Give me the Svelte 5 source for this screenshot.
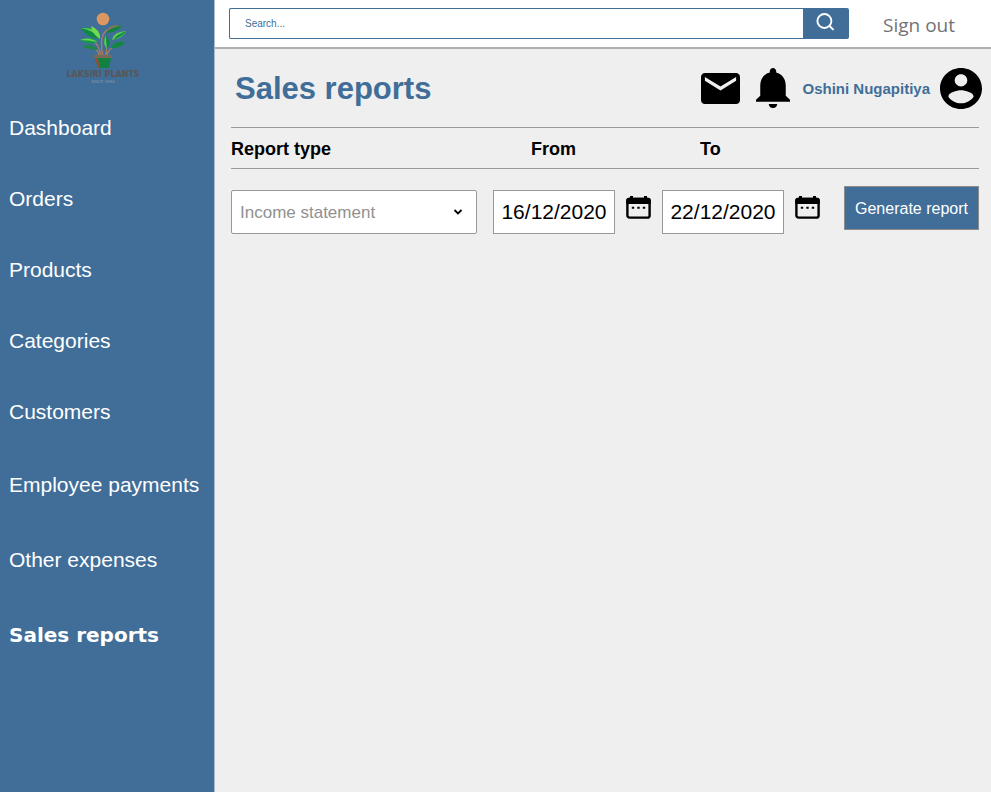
<script>
  const pages = [
    { name: 'Dashboard' },
    { name: 'Orders' },
    { name: 'Products' },
    { name: 'Categories' },
    { name: 'Customers' },
    { name: 'Employee payments', tall: true },
    { name: 'Other expenses', tall: true },
    { name: 'Sales reports', tall: true },
  ];
  const current = 'Sales reports';

  let query = $state('');
  let reportType = $state('Income statement');
  let from = $state('16/12/2020');
  let to = $state('22/12/2020');
</script>

{#snippet calendar()}
  <svg width="25" height="23" viewBox="0 0 25 23" aria-hidden="true">
    <rect x="1.4" y="3" width="22.2" height="18.6" rx="2.2" fill="none" stroke="#000" stroke-width="2.4" />
    <path d="M.2 8V4.4Q.2 1.8 2.8 1.8H22.2Q24.8 1.8 24.8 4.4V8Z" />
    <path d="M4 0h3v3H4zM18 0h3v3h-3z" />
    <path d="M5.8 10.8h2.4v2H5.8zM11.3 10.8h2.4v2h-2.4zM16.8 10.8h2.4v2h-2.4z" />
  </svg>
{/snippet}

<div class="app">
  <aside>
    <div class="brand">
      <svg width="50" height="58" viewBox="0 0 50 58" aria-hidden="true">
        <circle cx="25" cy="7" r="6.3" fill="#dd9760" />
        <g fill="none" stroke="#a98063" stroke-width="1.3">
          <path d="M23 45Q22 33 14 28" />
          <path d="M25 45Q22 30 25 23Q28 17 35 16" />
          <path d="M27 45Q30 38 28 28" />
          <path d="M28 45Q31 36 38 33" />
          <path d="M21 43Q19 33 6 35" />
        </g>
        <path d="M3 16Q18 13 22 27Q8 26 3 16Z" fill="#0e8a45" />
        <path d="M3 16Q15 18 22 27Q21 15 3 16Z" fill="#5fce4c" />
        <path d="M13 14Q23 18 22 27Q14 22 13 14Z" fill="#72da4e" />
        <path d="M28 21Q31 11 44 14Q38 21 28 21Z" fill="#12823f" />
        <path d="M28 20Q31 11 44 14Q35 14 28 20Z" fill="#8b7560" />
        <path d="M34 28Q35 20 48 19Q46 26 34 28Z" fill="#67d052" />
        <path d="M35 28Q39 22 48 19Q45 25 35 28Z" fill="#14904a" />
        <path d="M2 28Q12 23 20 30Q10 34 2 28Z" fill="#19994a" />
        <path d="M2 28Q10 24 20 30Q10 28 2 28Z" fill="#69d554" />
        <path d="M28 23Q34 29 29 37Q24 31 28 23Z" fill="#0d8842" />
        <path d="M28 23Q28 30 29 37Q24 31 28 23Z" fill="#62cc4e" />
        <path d="M33 36Q36 28 47 30Q43 37 33 36Z" fill="#138844" />
        <path d="M4 35Q14 30 20 38Q10 37 4 35Z" fill="#21854a" />
        <path d="M16 43H34V46H16Z" fill="#79695a" />
        <path d="M17 46H33L31 56H20Z" fill="#118141" />
        <path d="M17 46H20L22 56H20Z" fill="#87533a" />
      </svg>
      <strong>LAKSIRI PLANTS</strong>
      <small>SINCE 1990</small>
    </div>
    <nav aria-label="Main">
      <ul>
        {#each pages as page}
          <li class:tall={page.tall}>
            <a href="#{page.name}" class:current={page.name === current} aria-current={page.name === current ? 'page' : undefined}>{page.name}</a>
          </li>
        {/each}
      </ul>
    </nav>
  </aside>

  <div class="content">
    <div class="topbar">
      <form class="search" role="search">
        <input type="search" aria-label="Search" placeholder="Search..." bind:value={query} />
        <button type="button" aria-label="Search">
          <svg width="20" height="20" viewBox="0 0 20 20" fill="none" stroke="#fff" stroke-width="1.9" stroke-linecap="round" aria-hidden="true">
            <circle cx="8.4" cy="9" r="7" />
            <path d="M13.6 14L17 17.4" />
          </svg>
        </button>
      </form>
      <a class="signout" href="#signout">Sign out</a>
    </div>

    <main>
      <header>
        <h1>Sales reports</h1>
        <button type="button" class="icon mail" aria-label="Messages">
          <svg width="39" height="31" viewBox="2 4 20 16" preserveAspectRatio="none" aria-hidden="true">
            <path d="M20 4H4c-1.1 0-1.99.9-1.99 2L2 18c0 1.1.9 2 2 2h16c1.1 0 2-.9 2-2V6c0-1.1-.9-2-2-2zm0 4l-8 5-8-5V6l8 5 8-5v2z" />
          </svg>
        </button>
        <button type="button" class="icon bell" aria-label="Notifications">
          <svg width="34" height="40" viewBox="4 2.5 16 19.5" preserveAspectRatio="none" aria-hidden="true">
            <path d="M12 22c1.1 0 2-.9 2-2h-4c0 1.1.89 2 2 2zm6-6v-5c0-3.07-1.64-5.64-4.5-6.32V4c0-.83-.67-1.5-1.5-1.5s-1.5.67-1.5 1.5v.68C7.63 5.36 6 7.92 6 11v5l-2 2v1h16v-1l-2-2z" />
          </svg>
        </button>
        <span class="user">Oshini Nugapitiya</span>
        <button type="button" class="icon" aria-label="Account">
          <svg width="42" height="41" viewBox="2 2 20 20" preserveAspectRatio="none" aria-hidden="true">
            <path d="M12 2C6.48 2 2 6.48 2 12s4.48 10 10 10 10-4.48 10-10S17.52 2 12 2zm0 3c1.66 0 3 1.34 3 3s-1.34 3-3 3-3-1.34-3-3 1.34-3 3-3zm0 14.2c-2.5 0-4.71-1.28-6-3.22.03-1.99 4-3.08 6-3.08 1.99 0 5.97 1.09 6 3.08-1.29 1.94-3.5 3.22-6 3.22z" />
          </svg>
        </button>
      </header>

      <form class="report">
        <div class="row labels">
          <label for="type">Report type</label>
          <label class="date-label" for="from">From</label>
          <label class="date-label" for="to">To</label>
        </div>
        <div class="row fields">
          <div class="select">
            <select id="type" bind:value={reportType}>
              <option>Income statement</option>
            </select>
            <svg width="10" height="8" viewBox="0 0 10 8" fill="none" stroke="#000" stroke-width="1.8" aria-hidden="true">
              <path d="M1.5 2L5 5.5L8.5 2" />
            </svg>
          </div>
          <div class="date">
            <input id="from" type="text" bind:value={from} />
            <button type="button" class="icon" aria-label="Pick start date">{@render calendar()}</button>
          </div>
          <div class="date">
            <input id="to" type="text" bind:value={to} />
            <button type="button" class="icon" aria-label="Pick end date">{@render calendar()}</button>
          </div>
          <button type="button" class="generate">Generate report</button>
        </div>
      </form>
    </main>
  </div>
</div>

<style>
  * {
    box-sizing: border-box;
  }

  .app {
    display: flex;
    min-height: 100vh;
    background: #efefef;
    font-family: 'Liberation Sans', Arial, sans-serif;
  }

  button,
  input,
  select {
    margin: 0;
    font-family: inherit;
  }

  aside {
    flex: none;
    width: 215px;
    background: #406e98;
    border-right: 1px solid #a9bbcb;
  }

  .brand {
    display: flex;
    flex-direction: column;
    align-items: center;
    height: 92px;
    padding: 12px 8px 0 0;
    color: #5b5556;
    font-family: 'DejaVu Sans', sans-serif;
  }

  .brand svg {
    flex: none;
  }

  .brand strong {
    font-size: 8px;
    line-height: 9px;
    font-weight: 700;
  }

  .brand small {
    color: #8798ab;
    font-size: 4px;
    line-height: 5px;
  }

  ul {
    margin: 0;
    padding: 0;
    list-style: none;
  }

  li a {
    display: flex;
    align-items: center;
    height: 71px;
    padding-left: 9px;
    color: #fff;
    font-size: 21px;
    text-decoration: none;
    white-space: nowrap;
  }

  .tall a {
    height: 75px;
  }

  li .current {
    font-family: 'Arial Black', 'DejaVu Sans', sans-serif;
    font-size: 20px;
    font-weight: 900;
  }

  .content {
    flex: 1;
    min-width: 0;
  }

  .topbar {
    display: flex;
    align-items: flex-start;
    height: 49px;
    padding: 8px 36px 0 14px;
    background: #fff;
    border-bottom: 2px solid #b0b0b0;
  }

  .search {
    display: flex;
    flex: 1;
    height: 31px;
    min-width: 0;
  }

  .search input {
    flex: 1;
    min-width: 0;
    padding: 0 15px;
    border: 1px solid #406e98;
    border-right: 0;
    border-radius: 2px 0 0 2px;
    background: #fff;
    color: #406e98;
    font-size: 10px;
    appearance: none;
  }

  .search input::placeholder {
    color: #406e98;
    opacity: 1;
  }

  .search button {
    display: flex;
    align-items: flex-start;
    justify-content: center;
    width: 46px;
    padding: 4px 0 0;
    border: 0;
    border-radius: 0 2px 2px 0;
    background: #406e98;
  }

  .signout {
    margin-left: 34px;
    color: #737373;
    font-family: 'Segoe UI', 'Open Sans', sans-serif;
    font-size: 19px;
    line-height: 34px;
    text-decoration: none;
    white-space: nowrap;
  }

  header {
    display: flex;
    align-items: center;
    height: 78px;
    padding: 0 9px 0 20px;
  }

  h1 {
    flex: 1;
    margin: 0;
    padding-top: 2px;
    color: #406e98;
    font-size: 31px;
    line-height: 36px;
  }

  .icon {
    display: flex;
    padding: 0;
    border: 0;
    background: none;
  }

  .mail {
    margin-right: 16px;
  }

  .bell {
    margin-right: 12px;
  }

  .user {
    margin-right: 10px;
    color: #406e98;
    font-size: 15px;
    font-weight: 700;
    white-space: nowrap;
  }

  .report {
    padding: 0 12px 0 16px;
  }

  .row {
    display: grid;
    grid-template-columns: minmax(0, 1fr) 169px 169px 148px;
    align-items: start;
  }

  .labels {
    align-items: center;
    height: 42px;
    padding-top: 2px;
    border-top: 1px solid #999;
    border-bottom: 1px solid #999;
    font-size: 18px;
    font-weight: 700;
  }

  .date-label {
    padding-left: 38px;
  }

  .fields {
    padding-top: 17px;
  }

  .select {
    position: relative;
    margin: 4px 16px 0 0;
  }

  .select svg {
    position: absolute;
    right: 14px;
    top: 18px;
    pointer-events: none;
  }

  select {
    display: block;
    width: 100%;
    height: 44px;
    padding: 0 8px;
    border: 1px solid #999;
    border-radius: 2px;
    background: #fff;
    color: #919191;
    font-size: 17px;
    appearance: none;
  }

  .date {
    display: flex;
    align-items: flex-start;
    gap: 11px;
    margin-top: 4px;
  }

  .date input {
    width: 122px;
    height: 44px;
    padding: 0;
    border: 1px solid #999;
    background: #fff;
    color: #000;
    font-size: 21px;
    text-align: center;
  }

  .date .icon {
    padding-top: 6px;
  }

  .generate {
    justify-self: end;
    width: 135px;
    height: 44px;
    padding: 2px 0 0;
    border: 1px solid #8c8c8c;
    background: #406e98;
    color: #fff;
    font-size: 16px;
    white-space: nowrap;
  }
</style>
